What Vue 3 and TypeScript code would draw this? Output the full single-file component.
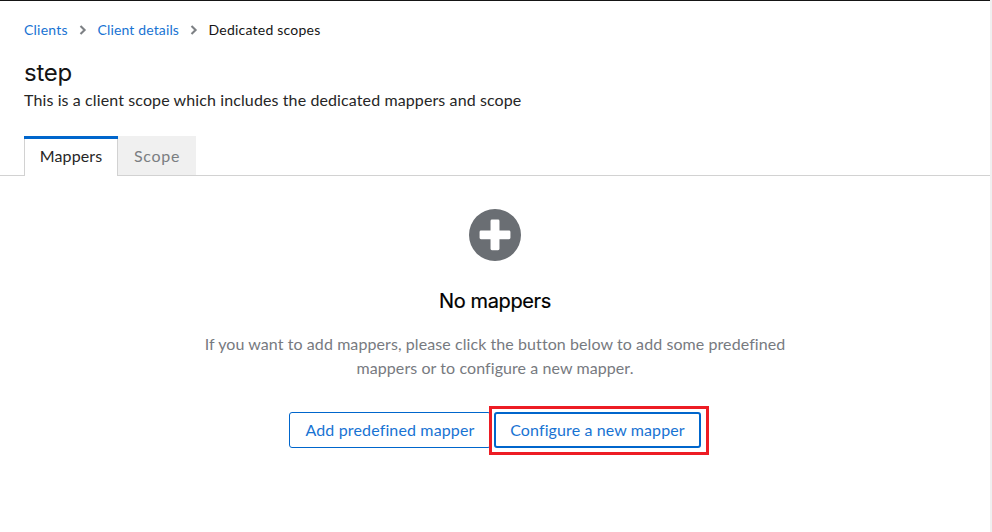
<script setup lang="ts">
import { ref } from 'vue'

const trail = ['Clients', 'Client details']
const tabs = ['Mappers', 'Scope']
const active = ref('Mappers')
</script>

<template>
  <main class="page">
    <header class="head">
      <nav class="breadcrumb">
        <template v-for="(item, i) in trail" :key="item">
          <a :class="['crumb', `crumb-${i}`]">{{ item }}</a>
          <svg class="chevron" viewBox="0 0 8 10"><path d="M1.5 1 5.6 5 1.5 9" /></svg>
        </template>
        <span class="current">Dedicated scopes</span>
      </nav>
      <h1>step</h1>
      <p class="lead">This is a client scope which includes the dedicated mappers and scope</p>
    </header>

    <div class="tabs" role="tablist">
      <button
        v-for="tab in tabs"
        :key="tab"
        role="tab"
        :class="['tab', { active: tab === active }]"
        @click="active = tab"
      ><span :class="tab.toLowerCase()">{{ tab }}</span></button>
    </div>

    <section class="empty">
      <svg class="plus" viewBox="0 0 512 512">
        <path d="M256 0a256 256 0 1 0 0 512a256 256 0 1 0 0-512ZM408 284q0 14-14 14h-94v94q0 14-14 14h-60q-14 0-14-14v-94h-94q-14 0-14-14v-58q0-14 14-14h94v-94q0-14 14-14h60q14 0 14 14v94h94q14 0 14 14Z" />
      </svg>
      <h2>No mappers</h2>
      <p class="body">
        If you want to add mappers, please click the button below to add some predefined<br />
        mappers or to configure a new mapper.
      </p>
      <div class="actions">
        <button class="btn add">Add predefined mapper</button>
        <div class="highlight"><button class="btn configure">Configure a new mapper</button></div>
      </div>
    </section>
  </main>
</template>

<style>
body { background: #fff; }
</style>

<style scoped>
.page {
  box-sizing: border-box;
  width: 992px;
  height: 532px;
  border-right: 2px solid #f0f0f0;
  background: linear-gradient(#151515, #151515) top / 100% 1px no-repeat #fff;
  color: #262626;
  font: 16px/24px Lato, sans-serif;
  letter-spacing: 0.11px;
  overflow: hidden;
}
h1, h2, p { margin: 0; font-weight: 400; }
button { font: inherit; letter-spacing: inherit; cursor: pointer; }
.head { padding: 19px 24px 0; }
.breadcrumb {
  display: flex;
  align-items: center;
  height: 21px;
  font-size: 14px;
  line-height: 21px;
  white-space: nowrap;
}
.crumb { color: #1873d3; letter-spacing: 0.14px; }
.crumb-0 { width: 44px; letter-spacing: 0.23px; }
.crumb-1 { width: 81.5px; }
.chevron {
  width: 8px;
  height: 10px;
  margin: 0 11px 0 10.5px;
  fill: none;
  stroke: #7d8084;
  stroke-width: 2.1;
}
.current { color: #151515; letter-spacing: 0.23px; }
h1 {
  margin-top: 17px;
  color: #151515;
  font: 400 24px/31px Inter, sans-serif;
  letter-spacing: -0.25px;
}
.lead { height: 24px; }
.tabs {
  display: flex;
  box-sizing: border-box;
  height: 40px;
  margin-top: 24px;
  padding-left: 24px;
  border-bottom: 1px solid #d2d2d2;
}
.tab {
  box-sizing: border-box;
  width: 78px;
  height: 39px;
  padding: 1px 0 0;
  border: 0;
  background: #f0f0f0;
  color: #7b7e82;
}
.tab.active {
  width: 94px;
  height: 40px;
  padding: 0;
  background:
    linear-gradient(#06c, #06c) top / 100% 3px no-repeat,
    linear-gradient(#d2d2d2, #d2d2d2) left / 1px 100% no-repeat,
    linear-gradient(#d2d2d2, #d2d2d2) right / 1px 100% no-repeat,
    #fff;
  color: #262626;
}
.scope { letter-spacing: 0.7px; }
.empty {
  display: flex;
  flex-direction: column;
  align-items: center;
  padding-top: 33px;
}
.plus { width: 52px; height: 52px; fill: #6a6e73; }
h2 {
  margin-top: 25px;
  font: 400 20px/30px Inter, sans-serif;
  letter-spacing: -0.38px;
  color: #000;
  -webkit-text-stroke: 0.2px #000;
}
.body {
  margin-top: 16px;
  text-align: center;
  color: #777a7f;
  letter-spacing: 0.08px;
  white-space: nowrap;
}
.actions {
  display: flex;
  align-items: flex-start;
  width: 420px;
  margin: 26px 0 0 8px;
}
.btn {
  box-sizing: border-box;
  height: 36px;
  padding: 0;
  border: 1px solid #06c;
  border-radius: 3px;
  background: #fff;
  color: #1873d3;
  white-space: nowrap;
}
.add { flex: none; width: 202px; margin-top: 6px; letter-spacing: 0.14px; }
.configure { width: 207px; border-width: 2px; }
.highlight {
  box-sizing: border-box;
  flex: none;
  width: 220px;
  height: 49px;
  margin-left: -2px;
  padding: 3px 2px;
  border: 3px solid #ed1c24;
}
</style>
